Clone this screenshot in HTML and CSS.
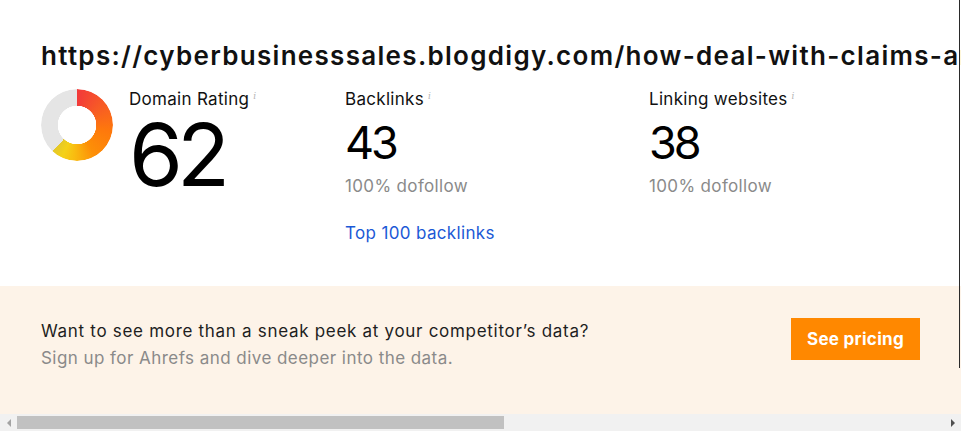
FILE: index.html
```html
<!DOCTYPE html>
<html lang="en">
<head>
<meta charset="utf-8">
<title>Backlink checker</title>
<link rel="stylesheet" href="styles.css">
</head>
<body>
<div class="page">
  <div class="content">
    <h1 class="url">https://cyberbusinesssales.blogdigy.com/how-deal-with-claims-and-complaints-in-business-sales</h1>
    <div class="metrics">
      <div class="metric metric-dr">
        <div class="donut"></div>
        <div class="metric-body">
          <div class="label">Domain Rating<span class="info">i</span></div>
          <div class="value value-big">62</div>
        </div>
      </div>
      <div class="metric metric-bl">
        <div class="label">Backlinks<span class="info">i</span></div>
        <div class="value">43</div>
        <div class="sub">100% dofollow</div>
        <a class="link" href="#">Top 100 backlinks</a>
      </div>
      <div class="metric metric-lw">
        <div class="label">Linking websites<span class="info">i</span></div>
        <div class="value">38</div>
        <div class="sub">100% dofollow</div>
      </div>
    </div>
  </div>
  <div class="banner">
    <div class="banner-text">
      <p class="banner-title">Want to see more than a sneak peek at your competitor’s data?</p>
      <p class="banner-sub">Sign up for Ahrefs and dive deeper into the data.</p>
    </div>
    <a class="btn" href="#">See pricing</a>
  </div>
</div>
<div class="hscroll">
  <span class="arrow arrow-left"></span>
  <div class="track"><div class="thumb"></div></div>
  <span class="arrow arrow-right"></span>
</div>
</body>
</html>
```

FILE: styles.css
```css
* { box-sizing: border-box; }
html, body { margin: 0; padding: 0; }
body {
  width: 961px;
  height: 431px;
  overflow: hidden;
  background: #fff;
  font-family: Inter, "Noto Sans", sans-serif;
  color: #111;
}
.page {
  height: 414px;
  overflow: hidden;
  display: flex;
  flex-direction: column;
  position: relative;
}
.page::after {
  content: "";
  position: absolute;
  right: 1px;
  top: 0;
  width: 1px;
  height: 368px;
  background: #2a2a2a;
}
.content {
  height: 286px;
  padding: 40px 0 0 41px;
}
.url {
  margin: 0;
  font-size: 26px;
  font-weight: 600;
  line-height: 32px;
  white-space: nowrap;
  letter-spacing: 1.3px;
  color: #111;
}
.metrics {
  display: flex;
  margin-top: 16px;
}
.metric-dr {
  display: flex;
  width: 304px;
}
.donut {
  width: 72px;
  height: 72px;
  margin-top: 1px;
  border-radius: 50%;
  background: conic-gradient(#f2393a 0deg, #f75a26 50deg, #fe780c 100deg, #fd8f07 150deg, #f9bc10 185deg, #f4d118 205deg, #e4c82a 223deg, #e5e5e5 223deg, #e5e5e5 360deg);
  -webkit-mask: radial-gradient(circle, transparent 19px, #000 19.5px);
  mask: radial-gradient(circle, transparent 19px, #000 19.5px);
  flex: none;
}
.metric-body {
  margin-left: 16px;
}
.label {
  font-size: 17px;
  line-height: 22px;
  letter-spacing: 0.3px;
  color: #111;
}
.info {
  font-family: "DejaVu Serif", serif;
  font-style: italic;
  font-size: 9px;
  color: #b5b5b5;
  vertical-align: top;
  margin-left: 4px;
  position: relative;
  top: -3px;
}
.value {
  font-size: 45px;
  line-height: 52px;
  font-weight: 400;
  letter-spacing: -3px;
  color: #000;
  margin-top: 7px;
}
.value-big {
  font-size: 87px;
  line-height: 64px;
  letter-spacing: -6px;
  margin-top: 13px;
}
.metric-bl {
  width: 304px;
}
.sub {
  font-size: 17px;
  line-height: 22px;
  letter-spacing: 0.35px;
  color: #8a8a8a;
  margin-top: 6px;
}
.link {
  display: block;
  margin-top: 25px;
  font-size: 17px;
  line-height: 22px;
  letter-spacing: 0.35px;
  color: #1b59d6;
  text-decoration: none;
}
.banner {
  height: 128px;
  background: #fdf3e8;
  display: flex;
  align-items: flex-start;
  padding: 32px 41px 0 41px;
  width: 961px;
}
.banner-text { flex: 1; }
.banner-title {
  margin: 0;
  font-size: 17px;
  line-height: 27px;
  letter-spacing: 0.7px;
  color: #1e1e1e;
}
.banner-sub {
  margin: 0;
  font-size: 17px;
  line-height: 27px;
  letter-spacing: 0.45px;
  color: #8a8a8a;
}
.btn {
  display: flex;
  align-items: center;
  justify-content: center;
  width: 129px;
  height: 42px;
  background: #ff8800;
  color: #fff;
  font-weight: 700;
  font-size: 17px;
  letter-spacing: 0.3px;
  text-decoration: none;
  font-family: Inter, "Liberation Sans", sans-serif;
  flex: none;
}
.hscroll {
  height: 17px;
  background: #f1f1f1;
  display: flex;
  align-items: center;
}
.arrow {
  width: 17px;
  height: 17px;
  display: flex;
  align-items: center;
  justify-content: center;
  flex: none;
}
.arrow-left::before {
  content: "";
  border-style: solid;
  border-width: 4px 4px 4px 0;
  border-color: transparent #a3a3a3 transparent transparent;
}
.arrow-right::before {
  content: "";
  border-style: solid;
  border-width: 4px 0 4px 4px;
  border-color: transparent transparent transparent #505050;
}
.track {
  flex: 1;
  height: 13px;
}
.thumb {
  width: 487px;
  height: 13px;
  background: #c1c1c1;
}
```
